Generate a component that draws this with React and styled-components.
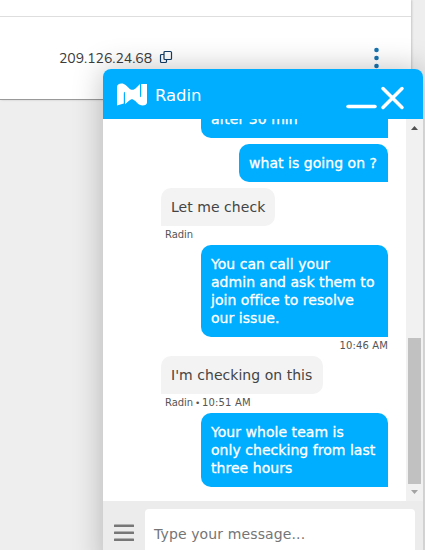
import React from "react";
import styled, { createGlobalStyle } from "styled-components";

const GlobalStyle = createGlobalStyle`
  * {
    box-sizing: border-box;
  }
  body {
    margin: 0;
    background-color: #eeeeee;
    font-family: Verdana, "DejaVu Sans", sans-serif;
  }
`;

const Page = styled.div`
  position: relative;
  width: 425px;
  height: 550px;
  overflow: hidden;
  background-color: #eeeeee;
`;

const Panel = styled.div`
  width: 411px;
  height: 100px;
  padding-top: 16px;
  background-color: #ffffff;
  border-bottom: 1px solid #999999;
  box-shadow: 1px 0 2px rgb(0 0 0 / 16%);
`;

const ServerRow = styled.div`
  display: flex;
  align-items: center;
  height: 83px;
  padding: 0 32px 0 59px;
  border-top: 1px solid #dedede;
`;

const Address = styled.span`
  margin-top: 2px;
  font-family: "Nunito", "Noto Sans", sans-serif;
  font-size: 14px;
  line-height: 20px;
  letter-spacing: -0.04px;
  color: #3c3c3c;
`;

const CopyIcon = styled.svg`
  margin: 0 0 2px 7px;
`;

const Dots = styled.svg`
  margin-left: auto;
`;

const ChatWindow = styled.section`
  position: absolute;
  left: 103px;
  top: 69px;
  width: 320px;
  height: 500px;
  display: flex;
  flex-direction: column;
  border-radius: 8px 8px 0 0;
  box-shadow: 0 0 30px rgb(0 0 0 / 25%);
`;

const ChatHeader = styled.header`
  flex: none;
  display: flex;
  align-items: center;
  height: 50px;
  padding: 0 18px 0 14px;
  background-color: #00aeff;
  border-radius: 8px 8px 0 0;
`;

const Agent = styled.span`
  flex: 1;
  margin: 3px 0 0 8px;
  font-size: 16.5px;
  line-height: 20px;
  letter-spacing: -0.05px;
  color: #ffffff;
`;

const LogArea = styled.div`
  flex: none;
  display: flex;
  height: 382px;
  background-color: #ffffff;
`;

const Log = styled.div`
  flex: 1;
  display: flex;
  flex-direction: column;
  justify-content: flex-end;
  gap: 6px;
  padding: 0 18px 14px 58px;
  overflow: hidden;
`;

const Message = styled.div`
  flex: none;
  display: flex;
  flex-direction: column;
  align-items: ${(props) => (props.$mine ? "flex-end" : "flex-start")};
`;

const Bubble = styled.div`
  width: ${(props) => props.$width}px;
  padding: 10px;
  border-radius: ${(props) =>
    props.$mine ? "10px 10px 0 10px" : "10px 10px 10px 0"};
  background-color: ${(props) => (props.$mine ? "#00aeff" : "#f3f3f3")};
  color: ${(props) => (props.$mine ? "#ffffff" : "#444444")};
  font-size: 14px;
  line-height: 18px;
  letter-spacing: 0.04px;
  -webkit-text-stroke: ${(props) => (props.$mine ? "0.3px #ffffff" : "0")};
  white-space: pre;
`;

const Meta = styled.div`
  display: flex;
  gap: 2px;
  height: 13px;
  padding: ${(props) => (props.$mine ? "3px 0 0" : "3px 0 0 4px")};
  font-size: 10px;
  line-height: 12px;
  color: #555555;
`;

const Sender = styled.span`
  letter-spacing: -0.05px;
`;

const Bullet = styled.span`
  width: 5px;
  font-size: 9px;
`;

const Time = styled.span`
  letter-spacing: 0.14px;
`;

const Scrollbar = styled.div`
  flex: none;
  display: flex;
  flex-direction: column;
  align-items: center;
  width: 17px;
  background-color: #f1f1f1;
`;

const ScrollArrow = styled.svg`
  flex: none;
`;

const Thumb = styled.div`
  width: 13px;
  height: 146px;
  margin-top: auto;
  background-color: #c1c1c1;
`;

const Composer = styled.footer`
  flex: 1;
  display: flex;
  padding: 8px 8px 0 11px;
  background-color: #ececec;
`;

const MenuIcon = styled.svg`
  margin: 15px 11px 0 0;
`;

const Field = styled.div`
  flex: 1;
  height: 50px;
  padding: 15px 9px;
  border-radius: 4px;
  background-color: #ffffff;
  font-size: 14px;
  line-height: 20px;
  letter-spacing: 0.12px;
  color: #757575;
`;

const messages = [
  { mine: true, width: 187, text: "after 30 min" },
  { mine: true, width: 149, text: "what is going on ?" },
  { width: 114, text: "Let me check", sender: "Radin" },
  {
    mine: true,
    width: 187,
    text: "You can call your\nadmin and ask them to\njoin office to resolve\nour issue.",
    time: "10:46 AM",
  },
  {
    width: 162,
    text: "I'm checking on this",
    sender: "Radin",
    time: "10:51 AM",
  },
  {
    mine: true,
    width: 187,
    text: "Your whole team is\nonly checking from last\nthree hours",
  },
];

const App = () => {
  return (
    <Page>
      <GlobalStyle />
      <Panel>
        <ServerRow>
          <Address>209.126.24.68</Address>
          <CopyIcon width="14" height="14" fill="none" stroke="#123e68">
            <path d="M6 1.5h5.5a1 1 0 0 1 1 1v6a1 1 0 0 1-1 1H6a1 1 0 0 1-1-1v-6a1 1 0 0 1 1-1zM5 4.5H2.5a1 1 0 0 0-1 1v6a1 1 0 0 0 1 1h4a1 1 0 0 0 1-1v-2" strokeWidth="1.2" />
          </CopyIcon>
          <Dots width="5" height="22" fill="#1674b1">
            <circle cx="2.5" cy="3" r="2.3" />
            <circle cx="2.5" cy="11" r="2.3" />
            <circle cx="2.5" cy="19" r="2.3" />
          </Dots>
        </ServerRow>
      </Panel>

      <ChatWindow>
        <ChatHeader>
          <svg width="30" height="24" fill="#ffffff">
            <path d="M0 23.5V5C0 2.8 1.8 1.5 4.5 1.5c3.500 0 5 2.500 7.500 4.700 1.200 1 2.200 1.600 3.500 1.600s2.300-0.800 3.500-1.800L23 2v11q0 2.300 0.600 2.300t0.600-2.300V2H30V20.500c0 2-1.800 3-4.500 3-3.500 0-5-2.500-7.500-4.700-1.200-1-2-1.600-3-1.600s-2 0.600-3 1.500L8 22.300V12q0-2.200-0.600-2.200t-0.600 2.200V21.500z" />
          </svg>
          <Agent>Radin</Agent>
          <svg width="60" height="38" stroke="#ffffff" strokeLinecap="round" fill="none">
            <path d="M3 31.500h27" strokeWidth="3.500" />
            <path d="M38 13.500l19 19M57 13.500l-19 19" strokeWidth="3.500" />
          </svg>
        </ChatHeader>

        <LogArea>
          <Log>
            {messages.map((item) => (
              <Message key={item.text} $mine={item.mine}>
                <Bubble $mine={item.mine} $width={item.width}>
                  {item.text}
                </Bubble>
                {(item.sender || item.time) && (
                  <Meta $mine={item.mine}>
                    {item.sender && <Sender>{item.sender}</Sender>}
                    {item.sender && item.time && <Bullet>•</Bullet>}
                    {item.time && <Time>{item.time}</Time>}
                  </Meta>
                )}
              </Message>
            ))}
          </Log>
          <Scrollbar>
            <ScrollArrow width="17" height="17" fill="#505050">
              <path d="M5 11l3.500-4 3.500 4z" />
            </ScrollArrow>
            <Thumb />
            <ScrollArrow width="17" height="17" fill="#a3a3a3">
              <path d="M5 6l3.500 4L12 6z" />
            </ScrollArrow>
          </Scrollbar>
        </LogArea>

        <Composer>
          <MenuIcon width="20" height="18" fill="#777777">
            <rect width="20" height="2.500" y="0.500" rx="0.500" />
            <rect width="20" height="2.500" y="7.500" rx="0.500" />
            <rect width="20" height="2.500" y="14.500" rx="0.500" />
          </MenuIcon>
          <Field>Type your message...</Field>
        </Composer>
      </ChatWindow>
    </Page>
  );
};

export default App;
